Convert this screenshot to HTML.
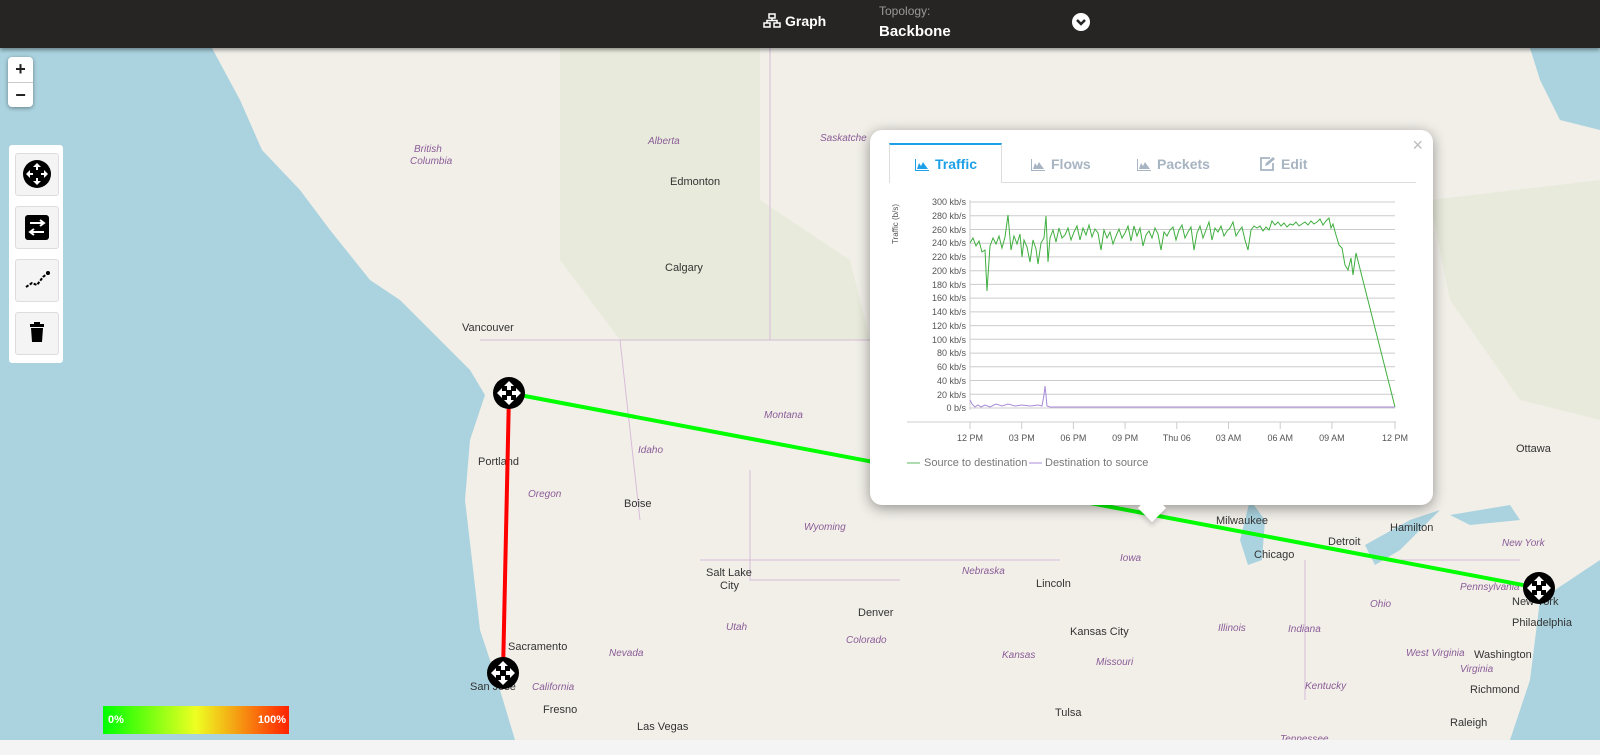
<!DOCTYPE html>
<html><head><meta charset="utf-8"><style>
body{margin:0;width:1600px;height:755px;overflow:hidden;font-family:"Liberation Sans",sans-serif;background:#f2efe9;position:relative}
.top{position:absolute;left:0;top:0;width:1600px;height:48px;background:#262524;color:#fff;z-index:5;box-shadow:0 2px 4px rgba(0,0,0,.4)}
.zoom{position:absolute;left:8px;top:57px;width:25px;height:50px;background:#fff;border-radius:4px;box-shadow:0 1px 4px rgba(0,0,0,.4);z-index:3}
.zoom div{height:25px;text-align:center;font-size:18px;line-height:24px;font-weight:bold;color:#222}
.tools{position:absolute;left:9px;top:145px;width:54px;height:218px;background:#fff;border-radius:3px;z-index:3}
.tb{position:absolute;left:6px;width:42px;height:41px;background:#f4f4f4;border:1px solid #ddd;border-radius:3px}
.pop{position:absolute;left:870px;top:130px;width:563px;height:375px;background:#fff;border-radius:12px;box-shadow:0 3px 14px rgba(0,0,0,.4);z-index:4}
.tab{position:absolute;top:156px;font-size:14px;color:#a7b4c2;font-weight:bold;z-index:5}
.tab svg{vertical-align:-2px;margin-right:6px}
</style></head><body>
<svg width="1600" height="755" style="position:absolute;left:0;top:0">
<rect width="1600" height="755" fill="#f2efe9"/>
<path d="M0,48 L212,48 L240,100 L262,150 L300,190 L330,230 L370,280 L400,300 L430,330 L470,370 L485,395 L470,440 L465,500 L472,560 L480,630 L500,690 L515,740 L0,740Z" fill="#aad3df"/>
<path d="M1530,48 L1600,48 L1600,130 L1560,120 L1540,80Z" fill="#aad3df"/>
<path d="M1250,500 L1265,520 L1262,560 L1248,565 L1240,540Z" fill="#aad3df"/>
<path d="M1365,545 L1410,520 L1440,510 L1400,550 L1375,565Z" fill="#aad3df"/>
<path d="M1450,515 L1510,505 L1520,520 L1470,525Z" fill="#aad3df"/>
<path d="M1540,600 L1600,560 L1600,740 L1510,740 L1530,680Z" fill="#aad3df"/>
<path d="M560,48 L760,48 L760,200 L850,260 L870,340 L620,340 L560,260Z" fill="#d8e6c7" opacity=".35"/>
<path d="M1430,200 L1600,180 L1600,420 L1520,400 L1450,300Z" fill="#d8e6c7" opacity=".35"/>
<path d="M770,48 L770,340 M480,340 L870,340 M620,340 L640,520 M750,470 L750,580 L900,580 M700,560 L1060,560 M1305,560 L1305,700 M1400,560 L1520,560" stroke="#d6bcd8" stroke-width="1" fill="none"/>
<g font-size="11" fill="#333">
<text x="670" y="185">Edmonton</text><text x="665" y="271">Calgary</text><text x="462" y="331">Vancouver</text>
<text x="478" y="465">Portland</text><text x="624" y="507">Boise</text><text x="706" y="576">Salt Lake</text><text x="720" y="589">City</text>
<text x="858" y="616">Denver</text><text x="1036" y="587">Lincoln</text><text x="1070" y="635">Kansas City</text><text x="508" y="650">Sacramento</text>
<text x="470" y="690">San Jose</text><text x="543" y="713">Fresno</text><text x="637" y="730">Las Vegas</text><text x="1055" y="716">Tulsa</text>
<text x="1216" y="524">Milwaukee</text><text x="1254" y="558">Chicago</text><text x="1328" y="545">Detroit</text><text x="1390" y="531">Hamilton</text>
<text x="1516" y="452">Ottawa</text><text x="1512" y="605">New York</text><text x="1512" y="626">Philadelphia</text><text x="1474" y="658">Washington</text>
<text x="1470" y="693">Richmond</text><text x="1450" y="726">Raleigh</text>
</g>
<g font-size="10" fill="#8a5c97" font-style="italic">
<text x="648" y="144">Alberta</text><text x="820" y="141">Saskatche</text><text x="414" y="152">British</text><text x="410" y="164">Columbia</text>
<text x="764" y="418">Montana</text><text x="638" y="453">Idaho</text><text x="528" y="497">Oregon</text><text x="804" y="530">Wyoming</text>
<text x="962" y="574">Nebraska</text><text x="726" y="630">Utah</text><text x="846" y="643">Colorado</text><text x="609" y="656">Nevada</text>
<text x="532" y="690">California</text><text x="1120" y="561">Iowa</text><text x="1002" y="658">Kansas</text><text x="1096" y="665">Missouri</text>
<text x="1218" y="631">Illinois</text><text x="1288" y="632">Indiana</text><text x="1370" y="607">Ohio</text><text x="1460" y="590">Pennsylvania</text>
<text x="1502" y="546">New York</text><text x="1406" y="656">West Virginia</text><text x="1305" y="689">Kentucky</text><text x="1460" y="672">Virginia</text>
<text x="1280" y="742">Tennessee</text>
</g>
<line x1="509" y1="393" x2="1539" y2="588" stroke="#00ff00" stroke-width="4"/>
<line x1="509" y1="393" x2="503" y2="673" stroke="#ff0000" stroke-width="4"/>
<g id="n"><circle r="16" fill="#000"/><path d="M0,-12 l-5,5 h3 v4 h4 v-4 h3Z M0,12 l-5,-5 h3 v-4 h4 v4 h3Z M-12,0 l5,-5 v3 h4 v4 h-4 v3Z M12,0 l-5,-5 v3 h-4 v4 h4 v3Z" fill="#fff"/></g>
<use href="#n" x="509" y="393"/><use href="#n" x="503" y="673"/><use href="#n" x="1539" y="588"/>
<rect x="0" y="740" width="1600" height="15" fill="#f4f4f4"/>
</svg>
<div class="top">
<svg style="position:absolute;left:763px;top:13px" width="18" height="16"><g fill="none" stroke="#fff" stroke-width="1.5"><rect x="6" y="1" width="6" height="4"/><rect x="1" y="10" width="6" height="4"/><rect x="11" y="10" width="6" height="4"/><path d="M9,5v2.5H4V10M9,7.5h5V10"/></g></svg>
<div style="position:absolute;left:785px;top:13px;font-size:14px;font-weight:bold">Graph</div>
<div style="position:absolute;left:879px;top:4px;font-size:12px;color:#999">Topology:</div>
<div style="position:absolute;left:879px;top:23px;font-size:15px;font-weight:bold">Backbone</div>
<svg style="position:absolute;left:1072px;top:13px" width="18" height="18"><circle cx="9" cy="9" r="9" fill="#fff"/><path d="M5,7 l4,4 l4,-4" stroke="#262524" stroke-width="2.5" fill="none"/></svg>
</div>
<div class="zoom"><div style="border-bottom:1px solid #ccc">+</div><div>−</div></div>
<div class="tools">
<div class="tb" style="top:8px"><svg width="42" height="41"><circle cx="21" cy="20" r="14" fill="#000"/><path d="M21,9 l-4,4 h3 v3 h2 v-3 h3Z M21,31 l-4,-4 h3 v-3 h2 v3 h3Z M10,20 l4,-4 v3 h3 v2 h-3 v3Z M32,20 l-4,-4 v3 h-3 v2 h3 v3Z" fill="#fff"/></svg></div>
<div class="tb" style="top:61px"><svg width="42" height="41"><rect x="9" y="8" width="24" height="25" rx="3" fill="#000"/><path d="M14,16 h14 M24,13 l4,3 l-4,3 M28,25 h-14 M18,22 l-4,3 l4,3" stroke="#fff" stroke-width="2" fill="none"/></svg></div>
<div class="tb" style="top:114px"><svg width="42" height="41"><path d="M10,27 l6,-4 l5,2 l6,-8 l5,-4" stroke="#000" stroke-width="2" stroke-dasharray="3 1.5" fill="none"/><circle cx="32" cy="13" r="2"/></svg></div>
<div class="tb" style="top:167px"><svg width="42" height="41"><rect x="14" y="11" width="14" height="3" fill="#000"/><rect x="18" y="9" width="6" height="3" fill="#000"/><path d="M15,15 h12 l-1,14 h-10Z" fill="#000"/></svg></div>
</div>
<div style="position:absolute;left:103px;top:706px;width:186px;height:28px;background:linear-gradient(90deg,#00ff00,#eeff22 50%,#ff2200);z-index:3;color:#fff;font-size:11px;font-weight:bold">
<span style="position:absolute;left:5px;top:8px">0%</span><span style="position:absolute;right:3px;top:8px">100%</span></div>
<div class="pop">
<div style="position:absolute;right:10px;top:5px;font-size:18px;color:#bbb">×</div>
<div style="position:absolute;left:19px;top:13px;width:111px;height:38px;border:1px solid #ddd;border-top:2px solid #1ea0e8;border-bottom:none;background:#fff;z-index:2"></div>
<div style="position:absolute;left:19px;top:52px;width:527px;border-top:1px solid #ddd"></div>
<div style="position:absolute;left:272px;top:368px;width:20px;height:20px;background:#fff;transform:rotate(45deg);box-shadow:3px 3px 4px rgba(0,0,0,.15)"></div>
</div>
<div class="tab" style="left:915px;color:#1ea0e8"><svg width="14" height="12"><path d="M0,0v12h14v-1H1V0Z M2,10 L4,4 L6,7 L8,3 L10,6 L13,10Z" fill="#1ea0e8"/></svg>Traffic</div>
<div class="tab" style="left:1031px"><svg width="14" height="12"><path d="M0,0v12h14v-1H1V0Z M2,10 L4,4 L6,7 L8,3 L10,6 L13,10Z" fill="#a7b4c2"/></svg>Flows</div>
<div class="tab" style="left:1137px"><svg width="14" height="12"><path d="M0,0v12h14v-1H1V0Z M2,10 L4,4 L6,7 L8,3 L10,6 L13,10Z" fill="#a7b4c2"/></svg>Packets</div>
<div class="tab" style="left:1260px"><svg width="15" height="14"><path d="M10,1 h-9 v12 h12 v-7" stroke="#a7b4c2" stroke-width="1.8" fill="none"/><path d="M5,9 l1,-3 l7,-6 l2,2 l-7,6Z" fill="#a7b4c2"/></svg>Edit</div>
<svg width="1600" height="755" style="position:absolute;left:0;top:0;z-index:6;pointer-events:none">
<g stroke="#ccc" stroke-width="1">
<line x1="970" y1="202" x2="1395" y2="202"/><line x1="970" y1="215.7" x2="1395" y2="215.7"/><line x1="970" y1="229.5" x2="1395" y2="229.5"/><line x1="970" y1="243.2" x2="1395" y2="243.2"/><line x1="970" y1="256.9" x2="1395" y2="256.9"/><line x1="970" y1="270.7" x2="1395" y2="270.7"/><line x1="970" y1="284.4" x2="1395" y2="284.4"/><line x1="970" y1="298.1" x2="1395" y2="298.1"/><line x1="970" y1="311.9" x2="1395" y2="311.9"/><line x1="970" y1="325.6" x2="1395" y2="325.6"/><line x1="970" y1="339.3" x2="1395" y2="339.3"/><line x1="970" y1="353.1" x2="1395" y2="353.1"/><line x1="970" y1="366.8" x2="1395" y2="366.8"/><line x1="970" y1="380.5" x2="1395" y2="380.5"/><line x1="970" y1="394.3" x2="1395" y2="394.3"/><line x1="970" y1="408" x2="1395" y2="408"/>
<line x1="970" y1="200" x2="970" y2="410"/>
<line x1="907" y1="422" x2="1396" y2="422"/>
</g>
<g stroke="#ccc"><path d="M970,422v7M1021.7,422v7M1073.4,422v7M1125.1,422v7M1176.8,422v7M1228.5,422v7M1280.2,422v7M1331.9,422v7M1395,422v7"/></g>
<g font-size="9" fill="#555" text-anchor="end">
<text x="966" y="205">300 kb/s</text><text x="966" y="219">280 kb/s</text><text x="966" y="233">260 kb/s</text><text x="966" y="246">240 kb/s</text><text x="966" y="260">220 kb/s</text><text x="966" y="274">200 kb/s</text><text x="966" y="288">180 kb/s</text><text x="966" y="301">160 kb/s</text><text x="966" y="315">140 kb/s</text><text x="966" y="329">120 kb/s</text><text x="966" y="343">100 kb/s</text><text x="966" y="356">80 kb/s</text><text x="966" y="370">60 kb/s</text><text x="966" y="384">40 kb/s</text><text x="966" y="398">20 kb/s</text><text x="966" y="411">0 b/s</text>
</g>
<text transform="translate(898,244) rotate(-90)" font-size="8" fill="#555">Traffic (b/s)</text>
<g font-size="9" fill="#555" text-anchor="middle">
<text x="970" y="441">12 PM</text><text x="1021.7" y="441">03 PM</text><text x="1073.4" y="441">06 PM</text><text x="1125.1" y="441">09 PM</text><text x="1176.8" y="441">Thu 06</text><text x="1228.5" y="441">03 AM</text><text x="1280.2" y="441">06 AM</text><text x="1331.9" y="441">09 AM</text><text x="1395" y="441">12 PM</text>
</g>
<line x1="907" y1="463" x2="920" y2="463" stroke="#5cb85c"/><text x="924" y="466" font-size="11" fill="#777">Source to destination</text>
<line x1="1029" y1="463" x2="1042" y2="463" stroke="#a78bd8"/><text x="1045" y="466" font-size="11" fill="#777">Destination to source</text>
<polyline fill="none" stroke="#3fae3f" stroke-width="1" points="970,243 973,238 976,246 979,241 982,252 985,250 987,291 990,246 993,238 996,244 999,236 1002,248 1005,237 1008,215 1011,250 1014,236 1017,244 1020,234 1022,257 1024,240 1027,247 1030,262 1033,240 1036,249 1038,264 1041,243 1044,238 1046,216 1048,262 1050,238 1053,230 1056,242 1059,228 1062,238 1065,235 1068,228 1071,240 1074,232 1077,226 1080,240 1083,228 1086,235 1089,225 1092,237 1095,229 1098,233 1101,250 1104,230 1107,238 1110,232 1113,244 1116,236 1119,229 1122,238 1125,233 1128,226 1131,241 1134,226 1137,236 1140,228 1143,246 1146,235 1149,231 1152,238 1155,228 1158,234 1161,250 1164,232 1167,236 1170,230 1173,227 1176,240 1179,230 1182,225 1185,238 1188,232 1191,227 1194,250 1197,233 1200,226 1203,238 1206,230 1209,222 1212,240 1215,228 1218,232 1221,226 1224,236 1227,231 1230,228 1233,222 1236,236 1239,231 1242,227 1245,240 1248,250 1251,230 1254,226 1257,228 1260,226 1263,231 1266,227 1269,230 1272,221 1275,225 1278,222 1281,226 1284,223 1287,227 1290,224 1293,225 1296,222 1299,226 1302,224 1305,222 1308,225 1311,221 1314,224 1317,222 1320,219 1323,225 1326,221 1329,218 1331,228 1333,224 1336,235 1339,245 1342,248 1345,265 1348,270 1351,258 1353,275 1356,253 1395,407"/>
<polyline fill="none" stroke="#a78bd8" stroke-width="1" points="970,400 972,404 975,407 978,405 981,407 985,405 990,407 996,404 1002,406 1008,404 1015,406 1022,405 1030,406 1038,405 1042,406 1044,395 1045,386 1046,395 1047,406 1050,407 1395,407"/>
</svg>
</body></html>
